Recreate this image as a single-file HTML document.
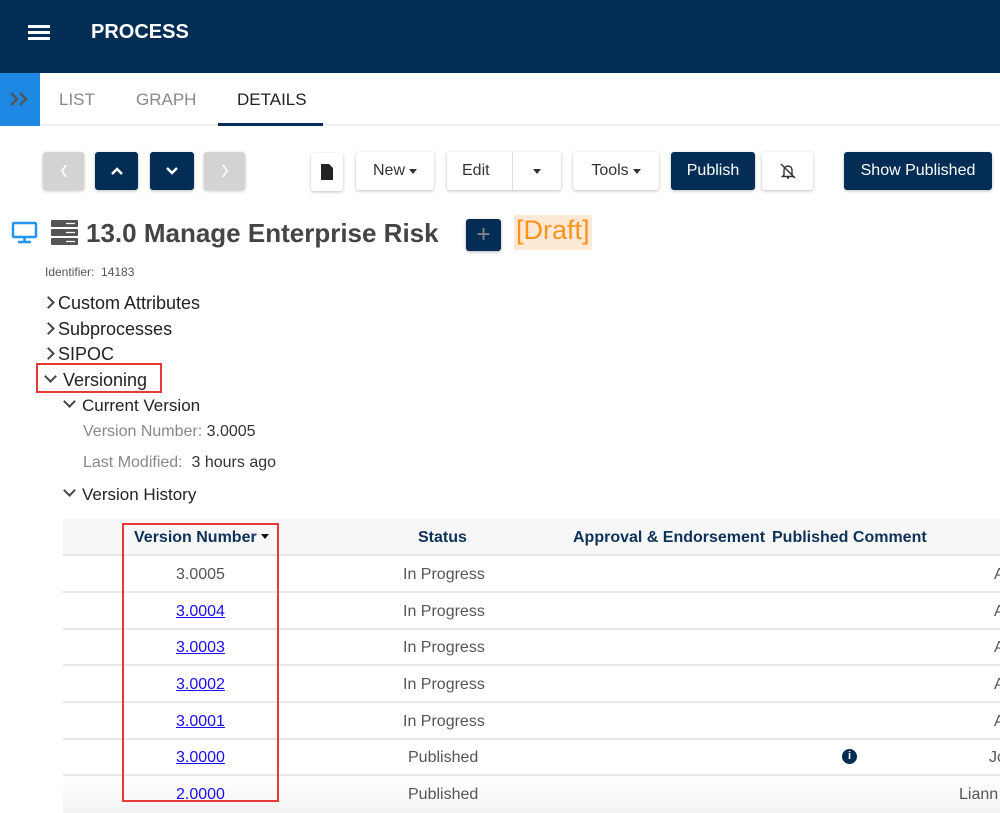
<!DOCTYPE html>
<html><head><meta charset="utf-8"><style>
*{box-sizing:border-box;margin:0;padding:0}
body{width:1000px;height:806px;overflow:hidden;background:#fff;font-family:"Liberation Sans",sans-serif;position:relative;color:#333}
.a{position:absolute}
.hdr{left:0;top:0;width:1000px;height:73px;background:#042d55}
.btn{position:absolute;top:152px;height:38px;border-radius:3px;box-shadow:0 1px 3px rgba(0,0,0,.25);font-size:16px;display:flex;align-items:center;justify-content:center}
.w{background:#fff;color:#333}
.d{background:#042d55;color:#fff}
.g{background:#d3d3d3;color:#fff}
.car{display:inline-block;width:0;height:0;border-left:4px solid transparent;border-right:4px solid transparent;border-top:5px solid #333;margin-left:4px;vertical-align:middle}
.tree{font-size:18px;color:#222}
.chev{display:inline-block;width:9px;height:9px;border-right:2.5px solid #444;border-bottom:2.5px solid #444}
.row{position:absolute;left:63px;width:937px;height:37px;border-bottom:2px solid #e8e8e8;font-size:16px;color:#555}
.row span{position:absolute;top:10px}
.lk{color:#1a0dee;text-decoration:underline}
</style></head><body>
<div class="a hdr"></div>
<div class="a" style="left:28px;top:25px;width:22px;height:3px;background:#fff;box-shadow:0 6px 0 #fff,0 12px 0 #fff"></div>
<div class="a" style="left:91px;top:21px;color:#fff;font-size:20px;font-weight:bold">PROCESS</div>
<div class="a" style="left:0;top:73px;width:1000px;height:53px;background:#fff;border-bottom:2px solid #eee"></div>
<div class="a" style="left:0;top:73px;width:40px;height:53px;background:#1e88e5"></div>
<svg class="a" style="left:9px;top:91px" width="22" height="16"><path d="M2 2L8 8L2 14M11 2L17 8L11 14" stroke="#555" stroke-width="2.5" fill="none"/></svg>
<div class="a" style="left:59px;top:90px;font-size:17px;color:#888">LIST</div>
<div class="a" style="left:136px;top:90px;font-size:17px;color:#888">GRAPH</div>
<div class="a" style="left:237px;top:90px;font-size:17px;color:#222">DETAILS</div>
<div class="a" style="left:218px;top:123px;width:105px;height:3px;background:#042d55"></div>

<div class="btn g" style="left:43px;width:41px"><svg width="10" height="16"><path d="M7 2L3 8L7 14" stroke="#fff" stroke-width="1.6" fill="none"/></svg></div>
<div class="btn d" style="left:95px;width:43px"><svg width="14" height="10"><path d="M2 8L7 3L12 8" stroke="#fff" stroke-width="2.5" fill="none"/></svg></div>
<div class="btn d" style="left:150px;width:44px"><svg width="14" height="10"><path d="M2 2L7 7L12 2" stroke="#fff" stroke-width="2.5" fill="none"/></svg></div>
<div class="btn g" style="left:204px;width:41px"><svg width="10" height="16"><path d="M3 2L7 8L3 14" stroke="#fff" stroke-width="1.6" fill="none"/></svg></div>
<div class="btn w" style="left:311px;width:32px;top:153px"><svg width="12" height="16"><path d="M0 0H8L12 4V16H0Z" fill="#222"/></svg></div>
<div class="btn w" style="left:356px;width:78px">New<span class="car"></span></div>
<div class="btn w" style="left:447px;width:114px;justify-content:flex-start"><span style="margin-left:15px">Edit</span><span style="position:absolute;left:65px;top:0;height:38px;border-left:1px solid #ddd;width:49px;display:flex;align-items:center;justify-content:center"><span class="car" style="margin:0"></span></span></div>
<div class="btn w" style="left:573px;width:86px">Tools<span class="car"></span></div>
<div class="btn d" style="left:671px;width:84px">Publish</div>
<div class="btn w" style="left:762px;width:51px"><svg width="20" height="20"><path d="M6 14V9a4 4 0 0 1 8 0v5l1.5 1.5h-11Z M9 17h2" stroke="#333" stroke-width="1.4" fill="none"/><path d="M3 3L17 17" stroke="#333" stroke-width="1.4"/></svg></div>
<div class="btn d" style="left:844px;width:148px">Show Published</div>

<svg class="a" style="left:11px;top:221px" width="28" height="24"><rect x="2" y="2" width="23" height="14" rx="1" fill="none" stroke="#2196f3" stroke-width="2.5"/><path d="M13.5 16v4M7 21h13" stroke="#2196f3" stroke-width="2.5"/></svg>
<svg class="a" style="left:51px;top:219px" width="28" height="26"><rect x="0" y="1" width="27" height="7" rx="1" fill="#555"/><rect x="0" y="10" width="27" height="7" rx="1" fill="#555"/><rect x="0" y="19" width="27" height="7" rx="1" fill="#555"/><path d="M15 4.5h9M15 13.5h9M15 22.5h9" stroke="#fff" stroke-width="1.2"/></svg>
<div class="a" style="left:86px;top:218px;font-size:26px;font-weight:bold;color:#444">13.0 Manage Enterprise Risk</div>
<div class="a" style="left:466px;top:219px;width:35px;height:32px;background:#042d55;border-radius:3px;color:#888;font-size:24px;text-align:center;line-height:31px;box-shadow:0 1px 3px rgba(0,0,0,.3)">+</div>
<div class="a" style="left:514px;top:215px;height:35px;padding:0 2px;background:#fde9d6;color:#f7931e;font-size:27px">[Draft]</div>
<div class="a" style="left:45px;top:265px;font-size:12px;color:#555">Identifier:&nbsp; 14183</div>

<div class="a tree" style="left:44px;top:293px"><span class="chev" style="transform:rotate(-45deg);margin-right:5px;position:relative;top:-2px"></span>Custom Attributes</div>
<div class="a tree" style="left:44px;top:319px"><span class="chev" style="transform:rotate(-45deg);margin-right:5px;position:relative;top:-2px"></span>Subprocesses</div>
<div class="a tree" style="left:44px;top:344px"><span class="chev" style="transform:rotate(-45deg);margin-right:5px;position:relative;top:-2px"></span>SIPOC</div>
<div class="a" style="left:36px;top:363px;width:126px;height:30px;border:2px solid #e53935"></div>
<div class="a tree" style="left:46px;top:370px"><span class="chev" style="transform:rotate(45deg);margin-right:8px;position:relative;top:-5px"></span>Versioning</div>
<div class="a tree" style="left:65px;top:396px;font-size:17px"><span class="chev" style="transform:rotate(45deg);margin-right:8px;position:relative;top:-5px"></span>Current Version</div>
<div class="a" style="left:83px;top:423px;font-size:16px;color:#888">Version Number: <span style="color:#333">3.0005</span></div>
<div class="a" style="left:83px;top:454px;font-size:16px;color:#888">Last Modified:&nbsp; <span style="color:#333">3 hours ago</span></div>
<div class="a tree" style="left:65px;top:485px;font-size:17px"><span class="chev" style="transform:rotate(45deg);margin-right:8px;position:relative;top:-5px"></span>Version History</div>

<div class="a" style="left:63px;top:519px;width:937px;height:37px;background:#f7f7f7;border-bottom:2px solid #e4e4e4"></div>
<div class="a" style="left:134px;top:529px;font-size:16px;font-weight:bold;color:#0d3158">Version Number<span class="car" style="border-top-color:#111;vertical-align:top;margin-top:5px"></span></div>
<div class="a" style="left:418px;top:529px;font-size:16px;font-weight:bold;color:#0d3158">Status</div>
<div class="a" style="left:573px;top:529px;font-size:16px;font-weight:bold;color:#0d3158">Approval &amp; Endorsement</div>
<div class="a" style="left:772px;top:529px;font-size:16px;font-weight:bold;color:#0d3158">Published Comment</div>

<div class="row" style="top:556px"><span style="left:113px">3.0005</span><span style="left:340px">In Progress</span><span style="left:931px">A</span></div>
<div class="row" style="top:593px"><span class="lk" style="left:113px">3.0004</span><span style="left:340px">In Progress</span><span style="left:931px">A</span></div>
<div class="row" style="top:629px"><span class="lk" style="left:113px">3.0003</span><span style="left:340px">In Progress</span><span style="left:931px">A</span></div>
<div class="row" style="top:666px"><span class="lk" style="left:113px">3.0002</span><span style="left:340px">In Progress</span><span style="left:931px">A</span></div>
<div class="row" style="top:703px"><span class="lk" style="left:113px">3.0001</span><span style="left:340px">In Progress</span><span style="left:931px">A</span></div>
<div class="row" style="top:739px"><span class="lk" style="left:113px">3.0000</span><span style="left:345px">Published</span><span style="left:779px;top:10px;width:15px;height:15px;border-radius:50%;background:#042d55;color:#fff;font-size:11px;font-weight:bold;text-align:center;line-height:15px">i</span><span style="left:926px">Jo</span></div>
<div class="row" style="top:776px;border:none;background:linear-gradient(#fff,#f3f3f3)"><span class="lk" style="left:113px">2.0000</span><span style="left:345px">Published</span><span style="left:896px">Liann</span></div>
<div class="a" style="left:122px;top:523px;width:157px;height:279px;border:2px solid #e53935"></div>
</body></html>
